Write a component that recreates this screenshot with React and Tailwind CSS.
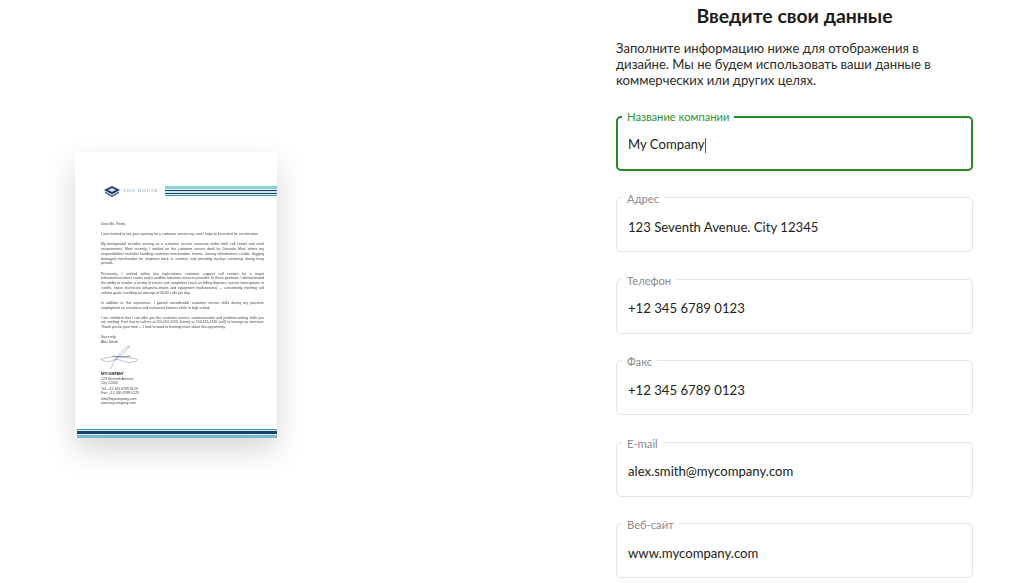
const FIELDS = [
  { label: "Название компании", value: "My Company", active: true },
  { label: "Адрес", value: "123 Seventh Avenue. City 12345" },
  { label: "Телефон", value: "+12 345 6789 0123" },
  { label: "Факс", value: "+12 345 6789 0123" },
  { label: "E-mail", value: "alex.smith@mycompany.com" },
  { label: "Веб-сайт", value: "www.mycompany.com" },
];

const PARAGRAPHS = [
  "I was excited to see your opening for a customer service rep, and I hope to be invited for an interview.",
  "My background includes serving as a customer service associate within both call center and retail environments. Most recently, I worked on the customer service desk for Discount Mart, where my responsibilities included handling customer merchandise returns, issuing refunds/store credits, flagging damaged merchandise for shipment back to vendors, and providing backup cashiering during busy periods.",
  "Previously, I worked within two high-volume customer support call centers for a major telecommunications carrier and a satellite television services provider. In these positions, I demonstrated the ability to resolve a variety of issues and complaints (such as billing disputes, service interruptions or cutoffs, repair technician delays/no-shows and equipment malfunctions) — consistently meeting call volume goals, handling an average of 50-60 calls per day.",
  "In addition to this experience, I gained considerable customer service skills during my part-time employment as a waitress and restaurant hostess while in high school.",
  "I am confident that I can offer you the customer service, communication and problem-solving skills you are seeking. Feel free to call me at 555-555-5555 (home) or 555-555-5555 (cell) to arrange an interview. Thank you for your time — I look forward to learning more about this opportunity.",
];

function TopStripes() {
  return (
    <div className="flex-1 ml-[4px] flex flex-col">
      <div className="h-[3px] bg-[#8fd0d6]" />
      <div className="h-px bg-[#e6f3f5]" />
      <div className="h-[1.5px] bg-[#1d3f6e]" />
      <div className="h-[1.5px] bg-[#cfe6ea]" />
      <div className="h-[1.5px] bg-[#1d3f6e]" />
      <div className="h-px bg-[#e6f3f5]" />
      <div className="h-px bg-[#3f9bb0]" />
    </div>
  );
}

function BottomStripes() {
  return (
    <div className="mt-auto ml-[2px] flex flex-col">
      <div className="h-px bg-[#3f9bb0]" />
      <div className="h-px bg-[#d8ecef]" />
      <div className="h-[3px] bg-[#1d3f6e]" />
      <div className="h-px bg-[#d8ecef]" />
      <div className="h-[3px] bg-[#72bccb]" />
    </div>
  );
}

function Letter() {
  return (
    <div className="w-[202px] h-[286px] flex flex-col bg-white shadow-[0_12px_28px_rgba(0,0,0,0.16)] font-['Liberation_Sans',sans-serif] text-[#444]">
      <div className="flex items-center mt-[34px] h-[10px]">
        <svg viewBox="0 0 16 11" className="w-[16px] h-[11px] ml-[29px] shrink-0 blur-[0.3px]">
          <path d="M8 0 16 4 8 8.5 0 4Z" fill="#1d3f6e" />
          <path d="M1 5.5 8 9.5 15 5.5V7L8 11 1 7Z" fill="#2c5486" />
          <path d="M8 2 12 4 8 6 4 4Z" fill="#d5e0ec" />
        </svg>
        <span className="ml-[3px] w-[38px] text-[5px] font-bold tracking-[0.7px] text-[#aab7c8] font-['Liberation_Serif',serif] whitespace-nowrap blur-[0.3px]">
          TOY HOUSE
        </span>
        <TopStripes />
      </div>
      <div className="mt-[26px] ml-[26px] w-[163px] text-[3.5px] leading-[4.77px] blur-[0.3px]">
        <p className="mb-[5.4px]">Dear Ms. Reed,</p>
        {PARAGRAPHS.map((text) => (
          <p key={text} className="mb-[5.4px] text-justify">{text}</p>
        ))}
        <p>Sincerely,</p>
        <p>Alex Smith</p>
        <svg viewBox="0 0 44 28" className="w-[44px] h-[26px] -ml-[3px] text-[#4a5a9a]" fill="none" stroke="currentColor" strokeWidth="0.4">
          <path d="M1 15C8 20 14 18 22 12C29 6 34 0 32 1C26 3 17 13 12 26M2 15C14 11 28 13 40 15C43 18 33 20 27 18C22 16 20 15 16 16" />
          <path d="M14 12C20 13 28 13 33 12" strokeWidth="0.7" />
        </svg>
        <p className="mt-[1px] font-bold text-[#111]">MYCOMPANY</p>
        <p>123 Seventh Avenue,</p>
        <p className="mb-[0.5px]">City 12345</p>
        <p>Tel: +12 345 6789 0123</p>
        <p className="mb-[0.5px]">Fax: +12 345 6789 0123</p>
        <p>info@mycompany.com</p>
        <p>www.mycompany.com</p>
      </div>
      <BottomStripes />
    </div>
  );
}

function Field({ label, value, active }) {
  return (
    <div className={`relative h-[55px] rounded-[5px] flex items-center pl-[11px] pr-[11px] ${active ? "border-2 border-[#218a21] -mb-[0.5px] pt-[3px]" : "border border-[#e3e3e3] pt-[6px]"}`}>
      <span className={`absolute bg-white px-[5px] text-[11.2px] leading-[14px] ${active ? "text-[#2f942f] -top-[8px] left-[4px]" : "text-[#8a8a8a] -top-[6px] left-[5px]"}`}>
        {label}
      </span>
      <span className={`text-[13.15px] text-[#222] ${active ? "-ml-px" : ""}`}>{value}</span>
      {active && <span className="w-px h-[15px] bg-[#218a21]" />}
    </div>
  );
}

export default function App() {
  return (
    <div className="h-[583px] w-[1024px] overflow-hidden bg-white flex font-['Lato',sans-serif]">
      <div className="w-[616px] shrink-0 pl-[75px] pt-[152px]">
        <Letter />
      </div>
      <div className="w-[357px] shrink-0 pt-[5px]">
        <h1 className="text-center text-[19.4px] leading-[22px] font-bold text-[#1a1a1a]">Введите свои данные</h1>
        <p className="mt-[13px] text-[13.1px] leading-[16px] text-[#2b2b2b]">
          Заполните информацию ниже для отображения в дизайне. Мы не будем использовать ваши данные в коммерческих или других целях.
        </p>
        <div className="mt-[28px] flex flex-col gap-[26.5px]">
          {FIELDS.map((field) => (
            <Field key={field.label} {...field} />
          ))}
        </div>
      </div>
    </div>
  );
}
